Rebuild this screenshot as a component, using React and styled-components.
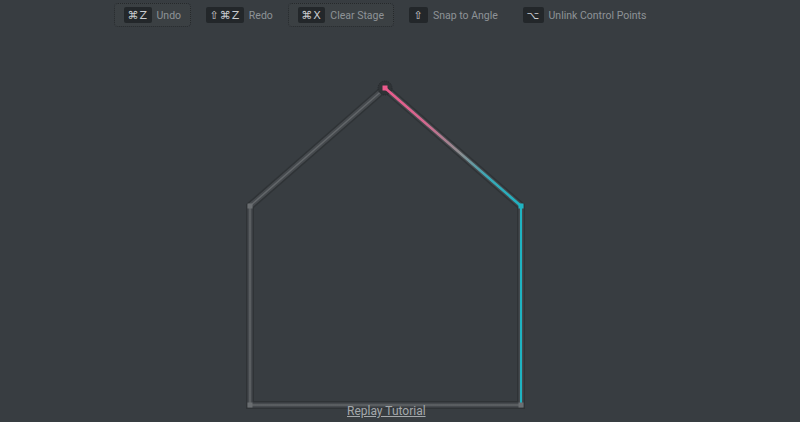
import React from 'react'
import styled, { createGlobalStyle } from 'styled-components'

const GlobalStyle = createGlobalStyle`
  html, body {
    margin: 0;
    padding: 0;
    background: #383d41;
  }
  body {
    font-family: Roboto, 'DejaVu Sans', sans-serif;
  }
`

const Page = styled.div`
  position: relative;
  width: 800px;
  height: 422px;
  overflow: hidden;
  display: flex;
  flex-direction: column;
  background: #383d41;
`

const Toolbar = styled.div`
  display: flex;
  align-items: center;
  gap: 15px;
  height: 30px;
  padding: 0 0 0 114px;
  box-sizing: border-box;
`

const Action = styled.div`
  display: flex;
  align-items: center;
  gap: 5px;
  height: 24px;
  margin-left: ${props => props.$space || 0}px;
  padding: 0 ${props => (props.$boxed ? '9px' : '0')};
  box-sizing: border-box;
  border-radius: 4px;
  border: ${props => (props.$boxed ? '1px dotted rgba(0, 0, 0, 0.35)' : 'none')};
  background: ${props => (props.$boxed ? 'rgba(255, 255, 255, 0.015)' : 'transparent')};
`

const Key = styled.span`
  display: inline-flex;
  align-items: center;
  justify-content: center;
  height: 16px;
  min-width: 19px;
  padding: 0 3.5px;
  box-sizing: border-box;
  background: #23272a;
  border-radius: 2px;
  color: #c9cccf;
  font-family: 'DejaVu Sans', sans-serif;
  font-size: 11px;
  letter-spacing: 1px;
`

const Label = styled.span`
  color: #8e9397;
  font-size: 10.5px;
  white-space: nowrap;
`

const Stage = styled.div`
  position: relative;
  flex: 1;
`

const Drawing = styled.svg`
  position: absolute;
  left: 0;
  top: -30px;
  width: 800px;
  height: 422px;
`

const Replay = styled.a`
  position: absolute;
  left: 347px;
  bottom: 4px;
  color: #a4a8ab;
  font-size: 12px;
  text-decoration: underline;
  cursor: pointer;
`

const actions = [
  { keys: '⌘Z', label: 'Undo', boxed: true },
  { keys: '⇧⌘Z', label: 'Redo' },
  { keys: '⌘X', label: 'Clear Stage', boxed: true },
  { keys: '⇧', label: 'Snap to Angle' },
  { keys: '⌥', label: 'Unlink Control Points', space: 10 },
]

const house = '385,88 250,206 250,405 521,405 521,206'

const Node = ({ x, y, color }) => (
  <rect x={x - 2.5} y={y - 2.5} width="5" height="5" fill={color} />
)

const App = () => (
  <Page>
    <GlobalStyle />
    <Toolbar>
      {actions.map(action => (
        <Action key={action.label} $boxed={action.boxed} $space={action.space}>
          <Key>{action.keys}</Key>
          <Label>{action.label}</Label>
        </Action>
      ))}
    </Toolbar>
    <Stage>
      <Drawing viewBox="0 0 800 422">
        <defs>
          <linearGradient id="roof" gradientUnits="userSpaceOnUse" x1="385" y1="88" x2="521" y2="206">
            <stop offset="0" stopColor="#ec5a8c" />
            <stop offset="0.3" stopColor="#d2698f" />
            <stop offset="0.55" stopColor="#8d8e90" />
            <stop offset="0.75" stopColor="#3aa8b6" />
            <stop offset="1" stopColor="#1fb3c2" />
          </linearGradient>
        </defs>
        <polygon points={house} fill="none" stroke="#2f3336" strokeWidth="8" />
        <polygon points={house} fill="none" stroke="#464a4e" strokeWidth="5" />
        <polygon points={house} fill="none" stroke="#2c3033" strokeWidth="1" strokeDasharray="1 1" />
        <polygon points={house} fill="none" stroke="#63676a" strokeWidth="1.5" />
        <circle cx="385" cy="88" r="7" fill="#2f3336" stroke="#25292c" strokeDasharray="1 1" />
        <line x1="385" y1="88" x2="521" y2="206" stroke="url(#roof)" strokeWidth="2.5" />
        <line x1="521" y1="206" x2="521" y2="405" stroke="#1fb3c2" strokeWidth="2" />
        <Node x={385} y={88} color="#ec5a8c" />
        <Node x={521} y={206} color="#1fb3c2" />
        <Node x={250} y={206} color="#6a6e71" />
        <Node x={250} y={405} color="#6a6e71" />
        <Node x={521} y={405} color="#6a6e71" />
      </Drawing>
      <Replay>Replay Tutorial</Replay>
    </Stage>
  </Page>
)

export default App
